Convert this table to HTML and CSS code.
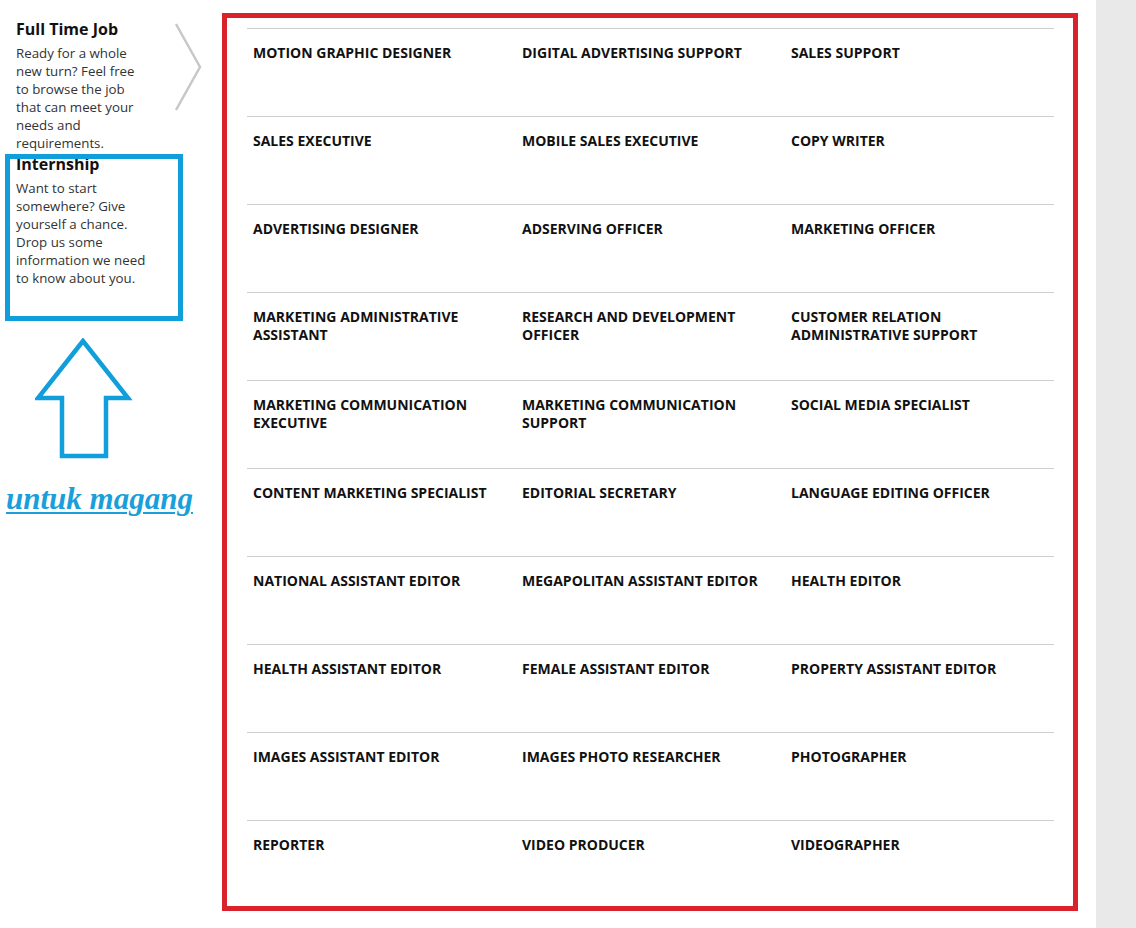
FILE: index.html
```html
<!DOCTYPE html>
<html lang="en">
<head>
<meta charset="utf-8">
<title>Careers</title>
<link rel="stylesheet" href="styles.css">
</head>
<body>
<div class="page">
  <aside class="sidebar">
    <div class="tab tab-active">
      <h3 class="tab-title">Full Time Job</h3>
      <p class="tab-text">Ready for a whole new turn? Feel free to browse the job that can meet your needs and requirements.</p>
      <svg class="chevron" width="28" height="90" viewBox="0 0 28 90"><polyline points="1,1 25,44 1,87" fill="none" stroke="#c8c8c8" stroke-width="2.5"/></svg>
    </div>
    <div class="tab tab-next">
      <h3 class="tab-title">Internship</h3>
      <p class="tab-text">Want to start somewhere? Give yourself a chance. Drop us some information we need to know about you.</p>
    </div>
    <div class="note-box"></div>
    <svg class="note-arrow" width="98" height="122" viewBox="0 0 98 122"><polygon points="48,3 3,60 27,60 27,118 71,118 71,60 93,60" fill="none" stroke="#119fdc" stroke-width="4.5" stroke-linejoin="miter"/></svg>
    <a class="note-link" href="#">untuk magang</a>
  </aside>
  <main class="main">
    <div class="jobs">
      <div class="job">MOTION GRAPHIC DESIGNER</div>
      <div class="job">DIGITAL ADVERTISING SUPPORT</div>
      <div class="job">SALES SUPPORT</div>
      <div class="job">SALES EXECUTIVE</div>
      <div class="job">MOBILE SALES EXECUTIVE</div>
      <div class="job">COPY WRITER</div>
      <div class="job">ADVERTISING DESIGNER</div>
      <div class="job">ADSERVING OFFICER</div>
      <div class="job">MARKETING OFFICER</div>
      <div class="job">MARKETING ADMINISTRATIVE ASSISTANT</div>
      <div class="job">RESEARCH AND DEVELOPMENT OFFICER</div>
      <div class="job">CUSTOMER RELATION ADMINISTRATIVE SUPPORT</div>
      <div class="job">MARKETING COMMUNICATION EXECUTIVE</div>
      <div class="job">MARKETING COMMUNICATION SUPPORT</div>
      <div class="job">SOCIAL MEDIA SPECIALIST</div>
      <div class="job">CONTENT MARKETING SPECIALIST</div>
      <div class="job">EDITORIAL SECRETARY</div>
      <div class="job">LANGUAGE EDITING OFFICER</div>
      <div class="job">NATIONAL ASSISTANT EDITOR</div>
      <div class="job">MEGAPOLITAN ASSISTANT EDITOR</div>
      <div class="job">HEALTH EDITOR</div>
      <div class="job">HEALTH ASSISTANT EDITOR</div>
      <div class="job">FEMALE ASSISTANT EDITOR</div>
      <div class="job">PROPERTY ASSISTANT EDITOR</div>
      <div class="job">IMAGES ASSISTANT EDITOR</div>
      <div class="job">IMAGES PHOTO RESEARCHER</div>
      <div class="job">PHOTOGRAPHER</div>
      <div class="job">REPORTER</div>
      <div class="job">VIDEO PRODUCER</div>
      <div class="job">VIDEOGRAPHER</div>
    </div>
  </main>
</div>
</body>
</html>
```
FILE: styles.css
```css
* { box-sizing: border-box; }
html, body { margin: 0; padding: 0; }
body {
  background: #e9e9e9;
  font-family: "Open Sans", "Liberation Sans", sans-serif;
  color: #111;
}
.page {
  width: 1096px;
  min-height: 928px;
  background: #fff;
  display: flex;
}
.sidebar {
  position: relative;
  width: 222px;
  flex: none;
  padding: 18px 0 0 16px;
}
.tab { position: relative; }
.tab-next { margin-top: 1px; }
.tab-title {
  margin: 0 0 4px;
  font-size: 16px;
  line-height: 22px;
  font-weight: 700;
  color: #111;
}
.tab-text {
  margin: 0;
  width: 132px;
  font-size: 13.3px;
  line-height: 18px;
  color: #333;
}
.chevron {
  position: absolute;
  left: 159px;
  top: 5px;
}
.note-box {
  position: absolute;
  left: 5px;
  top: 154px;
  width: 178px;
  height: 167px;
  border: 5px solid #119fdc;
}
.note-arrow {
  position: absolute;
  left: 35px;
  top: 338px;
}
.note-link {
  position: absolute;
  left: 6px;
  top: 481px;
  font-family: "Liberation Serif", "DejaVu Serif", serif;
  font-style: italic;
  font-weight: 700;
  font-size: 31px;
  line-height: 36px;
  color: #1a9fda;
  text-decoration: underline;
  text-decoration-thickness: 2px;
  text-underline-offset: 3px;
}
.main {
  flex: none;
  padding-top: 13px;
}
.jobs {
  width: 856px;
  border: 5px solid #d9222c;
  padding: 10px 19px 0 20px;
  display: grid;
  grid-template-columns: repeat(3, 269px);
}
.job {
  height: 88px;
  border-top: 1px solid #cfcfcf;
  padding: 15px 22px 0 6px;
  font-size: 14px;
  line-height: 18px;
  font-weight: 700;
  color: #111;
}
.job:nth-last-child(-n+3) { height: 86px; }
```
